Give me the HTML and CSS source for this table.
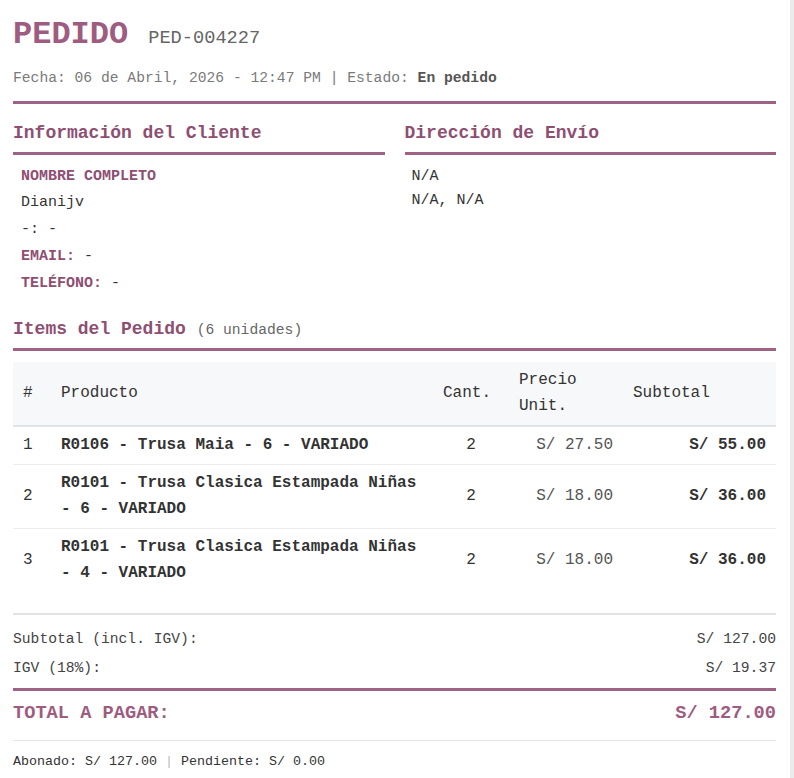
FILE: index.html
```html
<!DOCTYPE html>
<html lang="es">
<head>
<meta charset="utf-8">
<title>Pedido PED-004227</title>
<link rel="stylesheet" href="styles.css">
</head>
<body>
<div class="page">
  <header class="doc-header">
    <div class="title-row">
      <h1 class="title">PEDIDO</h1>
      <span class="code">PED-004227</span>
    </div>
    <div class="meta">Fecha: 06 de Abril, 2026 - 12:47 PM | Estado: <strong>En pedido</strong></div>
  </header>

  <div class="info-grid">
    <section class="info-box">
      <h2 class="section-title">Información del Cliente</h2>
      <div class="info-body">
        <div class="label-row">NOMBRE COMPLETO</div>
        <div class="row">Dianijv</div>
        <div class="row">-: -</div>
        <div class="row"><span class="lbl">EMAIL:</span> -</div>
        <div class="row"><span class="lbl">TELÉFONO:</span> -</div>
      </div>
    </section>
    <section class="info-box">
      <h2 class="section-title">Dirección de Envío</h2>
      <div class="addr-body">
        <div class="addr-row">N/A</div>
        <div class="addr-row">N/A, N/A</div>
      </div>
    </section>
  </div>

  <h2 class="items-title">Items del Pedido <span class="units">(6 unidades)</span></h2>

  <table class="items">
    <colgroup>
      <col class="c-num"><col class="c-prod"><col class="c-qty"><col class="c-price"><col class="c-sub">
    </colgroup>
    <thead>
      <tr><th>#</th><th>Producto</th><th>Cant.</th><th>Precio Unit.</th><th>Subtotal</th></tr>
    </thead>
    <tbody>
      <tr><td>1</td><td class="prod">R0106 - Trusa Maia - 6 - VARIADO</td><td class="qty">2</td><td class="price">S/ 27.50</td><td class="sub">S/ 55.00</td></tr>
      <tr><td>2</td><td class="prod">R0101 - Trusa Clasica Estampada Niñas - 6 - VARIADO</td><td class="qty">2</td><td class="price">S/ 18.00</td><td class="sub">S/ 36.00</td></tr>
      <tr><td>3</td><td class="prod">R0101 - Trusa Clasica Estampada Niñas - 4 - VARIADO</td><td class="qty">2</td><td class="price">S/ 18.00</td><td class="sub">S/ 36.00</td></tr>
    </tbody>
  </table>

  <div class="totals">
    <div class="t-row"><span>Subtotal (incl. IGV):</span><span>S/ 127.00</span></div>
    <div class="t-row"><span>IGV (18%):</span><span>S/ 19.37</span></div>
    <div class="t-total"><span>TOTAL A PAGAR:</span><span>S/ 127.00</span></div>
  </div>

  <div class="payments">Abonado: S/ 127.00 <span class="sep">|</span> Pendiente: S/ 0.00</div>
</div>
</body>
</html>
```

FILE: styles.css
```css
html {
  background: linear-gradient(to right, #ffffff calc(100% - 4px), #ececec calc(100% - 4px));
  min-height: 100%;
}
body {
  margin: 0;
  font-family: "Liberation Mono", "Courier New", monospace;
  color: #333;
}
.page {
  padding: 17px 18px 0 13px;
}
.doc-header {
  padding-bottom: 13px;
  border-bottom: 3px solid #9e6284;
}
.title-row {
  display: flex;
  align-items: baseline;
  height: 36px;
}
.title {
  margin: 0;
  font-size: 32px;
  line-height: 36px;
  font-weight: bold;
  color: #9e5c80;
}
.code {
  margin-left: 20px;
  font-size: 18.67px;
  color: #666;
}
.meta {
  margin-top: 15px;
  font-size: 14.67px;
  line-height: 20px;
  color: #7a7a7a;
}
.meta strong {
  color: #555;
}
.info-grid {
  display: grid;
  grid-template-columns: 1fr 1fr;
  column-gap: 20px;
  margin-top: 17px;
}
.section-title {
  margin: 0;
  font-size: 18px;
  line-height: 24px;
  font-weight: bold;
  color: #8e4f72;
  padding-bottom: 7px;
  border-bottom: 3px solid #9e6284;
}
.info-body {
  padding: 9px 8px 0;
  font-size: 15px;
  color: #333;
}
.label-row {
  line-height: 25px;
  font-weight: bold;
  color: #8e4f72;
}
.row {
  line-height: 27px;
}
.lbl {
  font-weight: bold;
  color: #8e4f72;
}
.addr-body {
  padding: 10px 7px 0;
  font-size: 15px;
}
.addr-row {
  line-height: 24px;
}
.items-title {
  margin: 20px 0 0;
  font-size: 18px;
  line-height: 24px;
  font-weight: bold;
  color: #8e4f72;
  padding-bottom: 6px;
  border-bottom: 3px solid #9e6284;
}
.units {
  font-size: 14.67px;
  font-weight: normal;
  color: #666;
}
.items {
  width: 100%;
  margin-top: 11px;
  border-collapse: collapse;
  table-layout: fixed;
  font-size: 16px;
  line-height: 26px;
  color: #333;
}
.c-num { width: 38px; }
.c-prod { width: 382px; }
.c-qty { width: 76px; }
.c-price { width: 114px; }
.c-sub { width: 153px; }
.items th {
  background: #f7f8fa;
  text-align: left;
  font-weight: normal;
  padding: 5px 10px 6px;
  border-bottom: 2px solid #e2e3e6;
  vertical-align: middle;
}
.items td {
  padding: 5px 10px 6px;
  vertical-align: middle;
  border-bottom: 1px solid #ececec;
}
.items tbody tr:last-child td {
  border-bottom: none;
}
.items td.prod {
  font-weight: bold;
}
.items td.qty {
  text-align: center;
}
.items td.price {
  text-align: right;
  color: #555;
}
.items td.sub {
  text-align: right;
  font-weight: bold;
}
.totals {
  margin-top: 21px;
  border-top: 2px solid #e2e2e2;
  padding-top: 10px;
}
.t-row {
  display: flex;
  justify-content: space-between;
  font-size: 14.67px;
  line-height: 29px;
  color: #444;
}
.t-total {
  display: flex;
  justify-content: space-between;
  margin-top: 5px;
  border-top: 3px solid #9e6284;
  padding: 10px 0 15px;
  font-size: 18.67px;
  line-height: 24px;
  font-weight: bold;
  color: #9e5c80;
}
.payments {
  border-top: 1px solid #e2e2e2;
  padding-top: 11px;
  font-size: 13.33px;
  line-height: 20px;
  color: #333;
}
.sep {
  color: #bbb;
}
```
